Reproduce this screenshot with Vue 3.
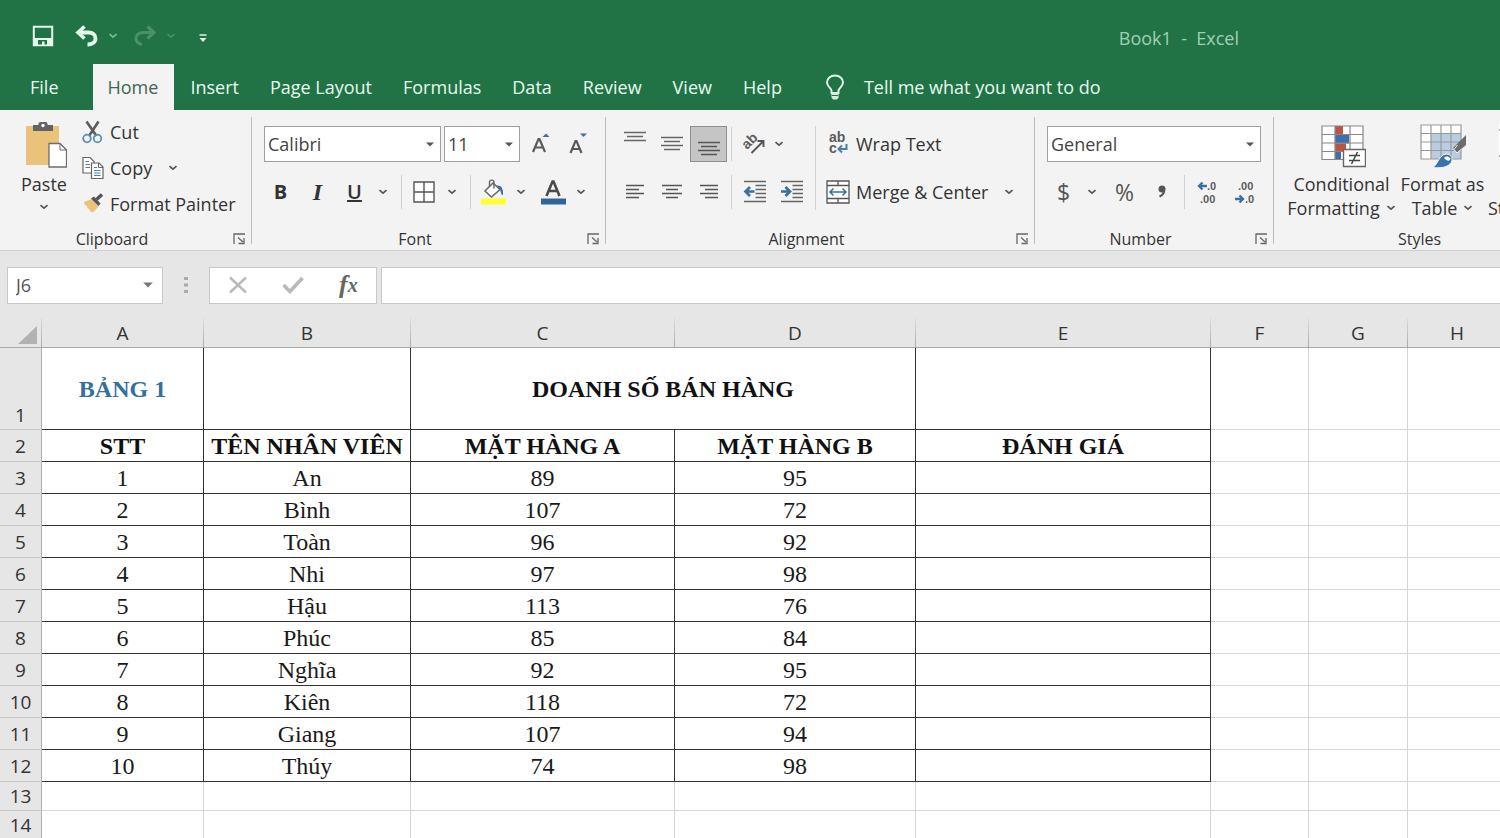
<script setup>
import { ref } from 'vue'

const tabs = ['File', 'Home', 'Insert', 'Page Layout', 'Formulas', 'Data', 'Review', 'View', 'Help']
const activeTab = ref('Home')
const fontName = ref('Calibri')
const fontSize = ref('11')
const numberFormat = ref('General')
const cellName = ref('J6')
const formula = ref('')

const columns = ['A', 'B', 'C', 'D', 'E', 'F', 'G', 'H']
const people = [
  [1, 'An', 89, 95],
  [2, 'Bình', 107, 72],
  [3, 'Toàn', 96, 92],
  [4, 'Nhi', 97, 98],
  [5, 'Hậu', 113, 76],
  [6, 'Phúc', 85, 84],
  [7, 'Nghĩa', 92, 95],
  [8, 'Kiên', 118, 72],
  [9, 'Giang', 107, 94],
  [10, 'Thúy', 74, 98],
]
</script>

<template>
  <div class="app">
    <svg class="defs" aria-hidden="true">
      <symbol id="chev" viewBox="0 0 10 6"><path d="M1.5 1.2 5 4.2 8.500 1.200" fill="none" stroke="currentColor" stroke-width="1.7" /></symbol>
      <symbol id="tri" viewBox="0 0 8 5"><path d="M0 0.500H8L4 4.500z" fill="currentColor" /></symbol>
      <symbol id="launch" viewBox="0 0 13 12"><path d="M1 11V1H12M5 4.500l5 4.500M11 5v5.500H5.500" fill="none" stroke="currentColor" stroke-width="1.300" /></symbol>
    </svg>

    <header class="title-bar">
      <div class="quick">
        <button class="q-save" aria-label="Save">
          <svg width="22" height="22" viewBox="0 0 22 22"><path d="M1.800 1.800H20.200V20.200H1.800z" fill="none" stroke="#e6fbef" stroke-width="2" /><path d="M2 13H20V20H2z" fill="#e6fbef" /><path d="M6 15h9v4.500h-2.500V16.500h-2.500v3H6z" fill="#217346" /></svg>
        </button>
        <button class="q-undo" aria-label="Undo">
          <svg width="24" height="22" viewBox="0 0 24 22"><path d="M3 7.500H13.500C18 7.500 20.500 10 20.500 13.500C20.500 17.500 17 19.500 12.500 19.500" fill="none" stroke="#e6fbef" stroke-width="3.800" /><path d="M9.500 1.500 3 7.500 9.500 13.500" fill="none" stroke="#e6fbef" stroke-width="3.600" /></svg>
        </button>
        <button class="q-chev" aria-label="Undo options"><svg width="10" height="6"><use href="#chev" /></svg></button>
        <button class="q-redo" aria-label="Redo">
          <svg width="24" height="22" viewBox="0 0 24 22"><path d="M21 7.500H10.500C6 7.500 3 10 3 13.500C3 17 5 18.500 9 19.500M14.500 1.500 21 7.500 14.500 13.500" fill="none" stroke="#4b9069" stroke-width="3.200" /></svg>
        </button>
        <button class="q-chev dim" aria-label="Redo options"><svg width="10" height="6"><use href="#chev" /></svg></button>
        <button class="q-more" aria-label="Customize Quick Access Toolbar">
          <svg width="8" height="13" viewBox="0 0 8 13"><path d="M0.500 5H7.500" stroke="#e6fbef" stroke-width="1.400" /><path d="M0.500 8H7.500L4 12z" fill="#e6fbef" /></svg>
        </button>
      </div>
      <span class="doc">Book1&nbsp; - &nbsp;Excel</span>
    </header>

    <nav class="tabs">
      <button v-for="t in tabs" :key="t" class="tab" :class="{ active: t === activeTab, file: t === 'File' }" @click="activeTab = t">{{ t }}</button>
      <button class="tell">
        <svg width="20" height="27" viewBox="0 0 20 27"><path d="M6.500 19V16.500C6.500 14.500 2 12.500 2 8.500C2 4.500 5.500 1.500 10 1.500S18 4.500 18 8.500C18 12.500 13.500 14.500 13.500 16.500V19z" fill="none" stroke="#e6fbef" stroke-width="1.900" /><path d="M6.500 19H13.500V23.500L12 25.500H8L6.500 23.500z" fill="#d5f0e0" /><path d="M7 21.500H13" stroke="#217346" stroke-width="1" /></svg>
        <span>Tell me what you want to do</span>
      </button>
    </nav>

    <section class="ribbon">
      <div class="group">
        <div class="body clip">
          <button class="paste">
            <svg width="46" height="48" viewBox="-2 -1 46 48"><path d="M3 5H36V44H3z" fill="#eac27a" /><path d="M10 4H15.500V3C15.500 1 17 1 20 1S24.500 1 24.500 3V4H30V10H10z" fill="#636363" /><circle cx="20" cy="4.500" r="1.700" fill="#fff" /><path d="M26 22.500H37L43.500 29V46H26z" fill="#fff" stroke="#6d6d6d" stroke-width="1.300" /><path d="M37 22.500V29H43.500" fill="none" stroke="#6d6d6d" /></svg>
            <span>Paste</span>
            <svg class="chev" width="10" height="6"><use href="#chev" /></svg>
          </button>
          <div class="clip-list">
            <button class="line">
              <svg width="22" height="24" viewBox="0 0 22 24"><path d="M4.500 1.500 14.500 16M16.500 1.500 7 16" stroke="#5c5c5c" stroke-width="2.600" fill="none" /><circle cx="5" cy="18.500" r="3.800" fill="none" stroke="#5b8fb5" stroke-width="1.800" /><circle cx="15.500" cy="18.500" r="3.800" fill="none" stroke="#5b8fb5" stroke-width="1.800" /></svg>
              <span>Cut</span>
            </button>
            <button class="line">
              <svg width="22" height="24" viewBox="0 0 22 24"><path d="M1 1.500H8L12 5.500V17H1z" fill="#fff" stroke="#666" stroke-width="1.200" /><path d="M3.500 5.500H7M3.500 8.500H8M3.500 11.500H8" stroke="#4b80a8" stroke-width="1.200" /><path d="M9.500 7H17L21 11V22.500H9.500z" fill="#fff" stroke="#666" stroke-width="1.200" /><path d="M16.500 7V11.500H21" fill="none" stroke="#666" /><path d="M12 11.500H15M12 14.500H18.500M12 17H18.500M12 19.500H18.500" stroke="#4b80a8" stroke-width="1.200" /></svg>
              <span>Copy</span>
              <svg class="chev gap" width="10" height="6"><use href="#chev" /></svg>
            </button>
            <button class="line">
              <svg width="22" height="24" viewBox="0 0 22 24"><path d="M2 10 10 7 16.500 14.500 11 20.500 8 19 7.500 17 5.500 16.500 5 14 3 13z" fill="#eac27a" /><path d="M9 6.500 12 4.500 18.500 11.500 16.500 14z" fill="#555" /><path d="M14.500 7.500 20 2.500" stroke="#555" stroke-width="3.600" /></svg>
              <span>Format Painter</span>
            </button>
          </div>
        </div>
        <footer><span>Clipboard</span><button class="launch" aria-label="Clipboard settings"><svg width="13" height="12"><use href="#launch" /></svg></button></footer>
      </div>

      <div class="group">
        <div class="body rows">
          <div class="row">
            <label class="combo name"><select v-model="fontName" aria-label="Font"><option>Calibri</option></select><svg width="8" height="5"><use href="#tri" /></svg></label>
            <label class="combo size"><select v-model="fontSize" aria-label="Font size"><option>11</option></select><svg width="8" height="5"><use href="#tri" /></svg></label>
            <button class="b37" aria-label="Increase font size"><svg width="20" height="24" viewBox="0 0 20 24"><path d="M2 20 7.500 7H8.500L14 20M4 15.500H12" fill="none" stroke="#5a5a5a" stroke-width="2.200" /><path d="M11.500 5 15 1.500 18.500 5z" fill="#3d6f9c" /></svg></button>
            <button class="b37" aria-label="Decrease font size"><svg width="20" height="24" viewBox="0 0 20 24"><path d="M2.500 21 7.500 9H8.500L13.500 21M4.500 17H11.500" fill="none" stroke="#5a5a5a" stroke-width="2.200" /><path d="M12 1.500H19L15.500 5z" fill="#3d6f9c" /></svg></button>
          </div>
          <div class="row">
            <button class="b37 bold">B</button>
            <button class="b37 italic">I</button>
            <button class="b37 under">U</button>
            <button class="cv" aria-label="Underline options"><svg width="10" height="6"><use href="#chev" /></svg></button>
            <i class="sep wide"></i>
            <button class="b28" aria-label="Borders"><svg width="22" height="22" viewBox="0 0 22 22"><path d="M1 1H21V21H1zM11 1V21M1 11H21" fill="#fff" stroke="#555" stroke-width="1.400" /></svg></button>
            <button class="cv off" aria-label="Border options"><svg width="10" height="6"><use href="#chev" /></svg></button>
            <i class="sep wide"></i>
            <button class="b28" aria-label="Fill color"><svg width="26" height="28" viewBox="0 0 26 28"><path d="M13 5 5 13 11.500 19 20 11.500z" fill="#fff" stroke="#666" stroke-width="1.500" /><path d="M9.500 9V4C9.500 1.500 14 1.500 14 4V10.500" fill="none" stroke="#666" stroke-width="1.400" /><path d="M16.500 7.500C21 7 23.500 10 23 17C20.500 16.500 21 13.500 20 11.500z" fill="#3d6f9c" /><path d="M1 20.500H26V26.500H1z" fill="#ffff2e" /></svg></button>
            <button class="cv off" aria-label="Fill options"><svg width="10" height="6"><use href="#chev" /></svg></button>
            <button class="b28 fc" aria-label="Font color"><svg width="26" height="28" viewBox="0 0 26 28"><path d="M6.500 18 12.500 3.500H13.500L19.500 18M8.500 13H17.500" fill="none" stroke="#4a4a4a" stroke-width="2.600" /><path d="M1 20.500H26V26.500H1z" fill="#2f6496" /></svg></button>
            <button class="cv off" aria-label="Font color options"><svg width="10" height="6"><use href="#chev" /></svg></button>
          </div>
        </div>
        <footer><span>Font</span><button class="launch" aria-label="Font settings"><svg width="13" height="12"><use href="#launch" /></svg></button></footer>
      </div>

      <div class="group">
        <div class="body align">
          <div class="rows">
            <div class="row">
              <button class="b37" aria-label="Top align"><svg width="24" height="30" viewBox="0 0 24 30"><path d="M1 3.500H23M4 7.500H20M1 11.500H23" stroke="#666" stroke-width="1.500" /></svg></button>
              <button class="b37" aria-label="Middle align"><svg width="24" height="30" viewBox="0 0 24 30"><path d="M1 8.500H23M4 12.500H20M1 16.500H23M4 20.500H20" stroke="#666" stroke-width="1.500" /></svg></button>
              <button class="b37 on" aria-label="Bottom align"><svg width="24" height="30" viewBox="0 0 24 30"><path d="M1 13.500H23M4 17.500H20M1 21.500H23M4 25.500H20" stroke="#555" stroke-width="1.500" /></svg></button>
              <i class="sep"></i>
              <button class="b33" aria-label="Orientation"><svg width="28" height="28" viewBox="0 0 28 28"><text x="0" y="0" transform="translate(8 20) rotate(-45)" class="ab">ab</text><path d="M12.500 23 24 11.500M18.500 11H24.500V17" fill="none" stroke="#555" stroke-width="1.900" /></svg></button>
              <button class="cv" aria-label="Orientation options"><svg width="10" height="6"><use href="#chev" /></svg></button>
            </div>
            <div class="row">
              <button class="b37" aria-label="Align left"><svg width="24" height="24" viewBox="0 0 24 24"><path d="M3 5.500H21M3 9.500H16M3 13.500H21M3 17.500H16" stroke="#555" stroke-width="1.400" /></svg></button>
              <button class="b37" aria-label="Center"><svg width="24" height="24" viewBox="0 0 24 24"><path d="M2 5.500H22M6 9.500H18M2 13.500H22M6 17.500H18" stroke="#555" stroke-width="1.400" /></svg></button>
              <button class="b37" aria-label="Align right"><svg width="24" height="24" viewBox="0 0 24 24"><path d="M3 5.500H21M8 9.500H21M3 13.500H21M8 17.500H21" stroke="#555" stroke-width="1.400" /></svg></button>
              <i class="sep"></i>
              <button class="b37" aria-label="Decrease indent"><svg width="24" height="24" viewBox="0 0 24 24"><path d="M1 1.500H23M12.500 5.500H23M12.500 9.500H23M12.500 13.500H23M12.500 17.500H23M1 21.500H23" stroke="#666" stroke-width="1.400" /><path d="M11.500 11.500H3M7 7 2.500 11.500 7 16" fill="none" stroke="#3d6f9c" stroke-width="2.700" /></svg></button>
              <button class="b37" aria-label="Increase indent"><svg width="24" height="24" viewBox="0 0 24 24"><path d="M1 1.500H23M12.500 5.500H23M12.500 9.500H23M12.500 13.500H23M12.500 17.500H23M1 21.500H23" stroke="#666" stroke-width="1.400" /><path d="M1 11.500H9.500M5.500 7 10 11.500 5.500 16" fill="none" stroke="#3d6f9c" stroke-width="2.700" /></svg></button>
            </div>
          </div>
          <i class="tall"></i>
          <div class="rows wrap">
            <button class="line">
              <svg width="24" height="32" viewBox="0 0 24 32"><text x="3" y="14" class="ab">ab</text><text x="3" y="25" class="ab">c</text><path d="M20.500 16V21H13M16 17.500 12.500 21 16 24.500" fill="none" stroke="#4a7dab" stroke-width="2" /></svg>
              <span>Wrap Text</span>
            </button>
            <button class="line">
              <svg width="24" height="24" viewBox="0 0 24 24"><path d="M1 1H23V23H1zM1 5.500H23M1 18.500H23M12 1V5.500M12 18.500V23" fill="#fff" stroke="#555" stroke-width="1.300" /><path d="M4 12H20M7.500 8.500 4 12 7.500 15.500M16.500 8.500 20 12 16.500 15.500" fill="none" stroke="#3d6f9c" stroke-width="1.600" /></svg>
              <span>Merge &amp; Center</span>
              <svg class="chev gap" width="10" height="6"><use href="#chev" /></svg>
            </button>
          </div>
        </div>
        <footer><span>Alignment</span><button class="launch" aria-label="Alignment settings"><svg width="13" height="12"><use href="#launch" /></svg></button></footer>
      </div>

      <div class="group">
        <div class="body rows">
          <div class="row">
            <label class="combo format"><select v-model="numberFormat" aria-label="Number format"><option>General</option></select><svg width="8" height="5"><use href="#tri" /></svg></label>
          </div>
          <div class="row">
            <button class="b37 sym">$</button>
            <button class="cv" aria-label="Currency options"><svg width="10" height="6"><use href="#chev" /></svg></button>
            <button class="b37 sym off">%</button>
            <button class="b37" aria-label="Comma style"><svg width="12" height="18" viewBox="0 0 12 18"><circle cx="6" cy="6" r="3.500" fill="#555" /><path d="M8 6C8.500 10 6 12.500 3.500 13.500" fill="none" stroke="#555" stroke-width="2.200" /></svg></button>
            <i class="sep"></i>
            <button class="b37" aria-label="Increase decimal"><svg width="22" height="30" viewBox="0 0 22 30"><text x="10" y="13" class="dec">.0</text><text x="3" y="26" class="dec">.00</text><path d="M10 9H2.500M5.500 5.500 2 9 5.500 12.500" fill="none" stroke="#3d6f9c" stroke-width="2.300" /></svg></button>
            <button class="b37" aria-label="Decrease decimal"><svg width="22" height="30" viewBox="0 0 22 30"><text x="4" y="13" class="dec">.00</text><text x="11" y="26" class="dec">.0</text><path d="M1 22H8.500M5.500 18.500 9 22 5.500 25.500" fill="none" stroke="#3d6f9c" stroke-width="2.300" /></svg></button>
          </div>
        </div>
        <footer><span>Number</span><button class="launch" aria-label="Number settings"><svg width="13" height="12"><use href="#launch" /></svg></button></footer>
      </div>

      <div class="group last">
        <div class="body styles">
          <button class="big cond">
            <svg width="48" height="46" viewBox="-3 -1 48 46"><path d="M1 1H42V34.500H1z" fill="#fff" /><path d="M14 1H22V9.500H14zM14 18.500H25V26.500H14z" fill="#c0533f" /><path d="M14 9.500H28V18.500H14zM14 26.500H20V34.500H14z" fill="#3f6fa8" /><path d="M1 1H42V34.500H1zM1 9.500H42M1 18H42M1 26.500H42M14 1V34.500M29 1V34.500" fill="none" stroke="#888" stroke-width="1.200" /><path d="M22.500 24.500H44.500V41.500H22.500z" fill="#fff" stroke="#666" stroke-width="1.400" /><path d="M28 30.500H39M28 35.500H39M36.500 27 30.500 39" stroke="#444" stroke-width="1.500" /></svg>
            <span>Conditional</span>
            <span>Formatting <svg class="chev" width="10" height="6"><use href="#chev" /></svg></span>
          </button>
          <button class="big table">
            <svg width="48" height="46" viewBox="0 0 48 46"><path d="M2 1H42V35H2z" fill="#fff" /><path d="M12 10H42V35H12z" fill="#b9cde2" /><path d="M2 1H42V35H2zM2 9.500H42M2 18H42M2 26.500H42M12 1V35M22 1V35M32 1V35" fill="none" stroke="#999" stroke-width="1.200" /><path d="M47 11V21L39 28 34 24z" fill="#6b6b6b" /><path d="M38.500 21 35 25.500 38 29 42.500 25" fill="#6b6b6b" stroke="#f3f3f3" stroke-width="1" /><path d="M14 43.500C19 40 20 31 27 30C33 30 35 36 31 40C27 44 20 44 14 43.500z" fill="#3874ab" stroke="#f3f3f3" stroke-width="1" /><path d="M25 34C27 31.500 31 32.500 31.500 35C30 38 28 37 25 34z" fill="#fff" /></svg>
            <span>Format as</span>
            <span>Table <svg class="chev" width="10" height="6"><use href="#chev" /></svg></span>
          </button>
          <button class="big cell">
            <svg width="48" height="46" viewBox="0 0 48 46"><path d="M11 -2H46V32H11z" fill="#fff" /><path d="M11 -2.500H46M11 6H46M11 32H46" stroke="#555" stroke-width="1.200" /></svg>
            <span>&nbsp;</span>
            <span>Styles</span>
          </button>
        </div>
        <footer><span>Styles</span></footer>
      </div>
    </section>

    <section class="formula-bar">
      <div class="name-box">
        <input v-model="cellName" aria-label="Name box" />
        <button aria-label="Named ranges"><svg width="10" height="6"><use href="#tri" /></svg></button>
      </div>
      <svg class="dots" width="4" height="18" viewBox="0 0 4 18"><path d="M0 1H4V4H0zM0 7.500H4V10.500H0zM0 14H4V17H0z" fill="#aaa" /></svg>
      <div class="fx-box">
        <button aria-label="Cancel"><svg width="20" height="18" viewBox="0 0 20 18"><path d="M2 1.500 18 16.500M18 1.500 2 16.500" stroke="#b9b9b9" stroke-width="2.400" /></svg></button>
        <button aria-label="Enter"><svg width="22" height="18" viewBox="0 0 22 18"><path d="M1.500 9 8 15.500 20.500 2" fill="none" stroke="#b9b9b9" stroke-width="3.600" /></svg></button>
        <button class="fx" aria-label="Insert function">f<small>x</small></button>
      </div>
      <input class="formula" v-model="formula" aria-label="Formula" />
    </section>

    <main class="sheet">
      <table>
        <colgroup><col class="c-num" /><col v-for="c in columns" :key="c" :class="'c-' + c.toLowerCase()" /></colgroup>
        <thead>
          <tr>
            <th class="corner"><svg width="20" height="20" viewBox="0 0 20 20"><path d="M19 1V19H0z" fill="#b2b2b2" /></svg></th>
            <th v-for="c in columns" :key="c" scope="col">{{ c }}</th>
          </tr>
        </thead>
        <tbody>
          <tr class="first">
            <th scope="row">1</th>
            <td class="k title">BẢNG 1</td><td class="k"></td>
            <td class="k b" colspan="2">DOANH SỐ BÁN HÀNG</td>
            <td class="k"></td><td></td><td></td><td></td>
          </tr>
          <tr>
            <th scope="row">2</th>
            <td class="k b">STT</td><td class="k b">TÊN NHÂN VIÊN</td><td class="k b">MẶT HÀNG A</td><td class="k b">MẶT HÀNG B</td><td class="k b">ĐÁNH GIÁ</td>
            <td></td><td></td><td></td>
          </tr>
          <tr v-for="(p, i) in people" :key="i">
            <th scope="row">{{ i + 3 }}</th>
            <td v-for="(v, j) in p" :key="j" class="k">{{ v }}</td>
            <td class="k"></td><td></td><td></td><td></td>
          </tr>
          <tr v-for="n in [13, 14]" :key="n" class="empty">
            <th scope="row">{{ n }}</th>
            <td v-for="c in columns" :key="c"></td>
          </tr>
        </tbody>
      </table>
    </main>
  </div>
</template>

<style>
body { overflow: hidden; }
</style>

<style scoped>
* { box-sizing: border-box; }
.app { height: 100vh; overflow: hidden; display: flex; flex-direction: column; background: #e6e6e6; color: #333; font-family: "Open Sans", "Noto Sans", sans-serif; font-size: 18px; line-height: 24px; }
.defs { display: none; }
button { border: 0; padding: 0; margin: 0; background: none; color: inherit; font: inherit; display: flex; align-items: center; justify-content: center; white-space: nowrap; }
svg { display: block; flex: none; }

.title-bar { flex: none; height: 64px; background: #217346; display: flex; justify-content: space-between; padding: 8px 261px 0 32px; color: #9fd0b4; }
.quick { display: flex; align-items: center; height: 56px; }
.q-undo { margin-left: 21px; }
.q-chev { width: 10px; margin-left: 9px; color: #7fbb99; }
.q-redo { margin-left: 15px; }
.q-chev.dim { color: #4b9069; }
.q-more { margin-left: 23px; }
.doc { line-height: 60px; }

.tabs { flex: none; height: 46px; background: #217346; display: flex; color: #e6fbef; }
.tab { padding: 0 15px 0 16px; }
.tab.file { padding: 0 34px 0 30px; }
.tab.active { background: #f3f3f3; color: #3f6552; padding-left: 15px; padding-right: 16px; }
.tell { margin-left: 28px; gap: 19px; }

.ribbon { flex: none; display: grid; grid-template-columns: 252px 354px 429px 239px 1fr; height: 141px; background: #f3f3f3; border-bottom: 1px solid #cfcfcf; }
.group { display: flex; flex-direction: column; min-width: 0; position: relative; }
.group:not(.last)::after { content: ""; position: absolute; right: 0; top: 7px; bottom: 6px; width: 1px; background: #bdbdbd; }
.body { flex: 1; }
footer { height: 23px; display: flex; align-items: center; padding-right: 6px; font-size: 16px; }
footer span { flex: 1; text-align: center; padding-right: 8px; }
.launch { width: 14px; color: #666; }
.last footer { padding: 0 0 0 124px; }
.last footer span { text-align: left; }
.chev { color: #555; }
.clip { display: flex; padding: 10px 0 0 21px; }
.paste { flex-direction: column; justify-content: flex-start; width: 46px; }
.paste span { margin: 4px 0 8px; }
.clip-list { margin: -6px 0 0 15px; display: flex; flex-direction: column; }
.line { height: 36px; justify-content: flex-start; gap: 6px; }
.line .gap { margin-left: 10px; }

.rows { display: flex; flex-direction: column; gap: 12px; padding: 16px 0 0 10px; }
.row { display: flex; align-items: center; height: 36px; }
.combo { display: grid; align-items: center; height: 36px; margin-right: 3px; }
.combo > * { grid-area: 1 / 1; }
.combo svg { justify-self: end; margin-right: 7px; color: #555; pointer-events: none; }
.combo select { appearance: none; width: 100%; height: 36px; border: 1px solid #a0a0a0; border-radius: 0; background: #fff; padding: 0 3px; font: inherit; color: #444; }
.combo.name { width: 177px; margin-left: 2px; }
.combo.size { width: 76px; margin-right: 2px; }
.combo.format { width: 214px; margin-left: 2px; }
.b37 { width: 37px; height: 36px; }
.b33 { width: 33px; height: 36px; }
.b28 { width: 28px; height: 36px; }
.fc { margin-left: 8px; }
.cv { width: 20px; height: 36px; color: #555; }
.off { margin-left: 4px; }
.bold { font-weight: 700; font-size: 20px; }
.italic { font-family: "Liberation Serif", serif; font-style: italic; font-weight: 700; font-size: 24px; }
.under { font-weight: 600; font-size: 20px; text-decoration: underline; }
.sep { width: 1px; height: 34px; background: #d0d0d0; margin: 0 4px; }
.sep.wide { margin: 0 8px; }
.on { background: #c5c5c5; border: 1px solid #8f8f8f; }
.align { display: flex; }
.align .rows { padding-left: 10px; }
.align .tall { width: 1px; height: 84px; background: #d0d0d0; margin: 16px 0 0 5px; }
.ab { font: 700 14px "Liberation Sans", sans-serif; fill: #5c5c5c; }
.dec { font: 700 11px "Liberation Sans", sans-serif; fill: #5c5c5c; }
.sym { font-size: 23px; color: #555; }

.styles { display: flex; padding: 14px 0 0 10px; overflow: hidden; }
.big { flex: none; flex-direction: column; justify-content: flex-start; }
.big span { display: flex; align-items: center; gap: 6px; }
.big > svg { margin-bottom: 2px; }
.cond { width: 115px; }
.table { width: 87px; }
.cell { margin-left: 2px; align-items: flex-start; }

.formula-bar { flex: none; display: flex; align-items: center; height: 67px; padding: 1px 0 0 7px; }
.name-box { display: flex; width: 156px; height: 37px; background: #fff; border: 1px solid #c8c8c8; }
.name-box input { flex: 1; min-width: 0; border: 0; padding: 0 8px; background: none; font: inherit; color: #555; }
.name-box button { width: 28px; color: #777; }
.dots { margin: 0 21px; }
.fx-box { display: flex; width: 168px; height: 37px; background: #fff; border: 1px solid #c8c8c8; }
.fx-box button { flex: 1; }
.fx-box .fx { font: italic 700 26px "Liberation Serif", serif; color: #666; }
.fx small { font-size: 20px; }
.formula { flex: 1; min-width: 0; height: 37px; margin-left: 4px; border: 1px solid #c8c8c8; border-right: 0; background: #fff; font: inherit; padding: 0 8px; }

.sheet { flex: 1; overflow: hidden; background: #fff; }
table { width: 100%; min-width: 1507px; table-layout: fixed; border-collapse: separate; border-spacing: 0; }
.c-num { width: 42px; }
.c-a { width: 162px; }
.c-b { width: 207px; }
.c-c { width: 264px; }
.c-d { width: 241px; }
.c-e { width: 295px; }
.c-f { width: 98px; }
.c-g, .c-h { width: 99px; }
th { background: #e6e6e6; font-size: 19px; font-weight: 400; padding: 0; border-bottom: 1px solid #a8a8a8; border-right: 1px solid #b0b0b0; color: #333; }
thead th { height: 30px; border-image: linear-gradient(#dedede, #a8a8a8) 1; border-width: 0 1px 1px 0; border-style: solid; }
.corner svg { margin: 4px 0 0 18px; }
tbody th { height: 32px; border-bottom-color: #c6c6c6; }
td { height: 32px; padding: 0; text-align: center; vertical-align: middle; border-right: 1px solid #d6d6d6; border-bottom: 1px solid #d6d6d6; font: 24px/28px "Liberation Serif", "Times New Roman", serif; color: #1a1a1a; white-space: nowrap; }
.k { border-color: #333; }
.b { font-weight: 700; color: #111; }
.title { font-weight: 700; color: #33709c; }
.first th { height: 82px; vertical-align: bottom; padding-bottom: 2px; }
.first td { height: 82px; }
.empty th, .empty td { height: 29px; }
</style>
